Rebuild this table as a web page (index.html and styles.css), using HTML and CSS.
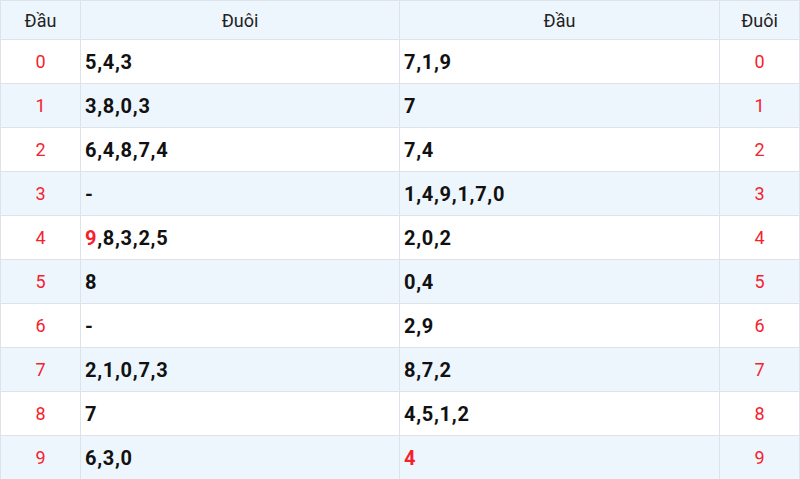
FILE: index.html
```html
<!DOCTYPE html>
<html>
<head>
<meta charset="utf-8">
<link rel="stylesheet" href="styles.css">
</head>
<body>
<table class="loto">
  <colgroup><col class="c-head"><col class="c-tail-a"><col class="c-tail-b"><col class="c-last"></colgroup>
  <thead>
    <tr><th>Đầu</th><th>Đuôi</th><th>Đầu</th><th>Đuôi</th></tr>
  </thead>
  <tbody>
    <tr><td class="num">0</td><td class="val">5,4,3</td><td class="val">7,1,9</td><td class="num">0</td></tr>
    <tr><td class="num">1</td><td class="val">3,8,0,3</td><td class="val">7</td><td class="num">1</td></tr>
    <tr><td class="num">2</td><td class="val">6,4,8,7,4</td><td class="val">7,4</td><td class="num">2</td></tr>
    <tr><td class="num">3</td><td class="val">-</td><td class="val">1,4,9,1,7,0</td><td class="num">3</td></tr>
    <tr><td class="num">4</td><td class="val"><span class="hot">9</span>,8,3,2,5</td><td class="val">2,0,2</td><td class="num">4</td></tr>
    <tr><td class="num">5</td><td class="val">8</td><td class="val">0,4</td><td class="num">5</td></tr>
    <tr><td class="num">6</td><td class="val">-</td><td class="val">2,9</td><td class="num">6</td></tr>
    <tr><td class="num">7</td><td class="val">2,1,0,7,3</td><td class="val">8,7,2</td><td class="num">7</td></tr>
    <tr><td class="num">8</td><td class="val">7</td><td class="val">4,5,1,2</td><td class="num">8</td></tr>
    <tr><td class="num">9</td><td class="val">6,3,0</td><td class="val"><span class="hot">4</span></td><td class="num">9</td></tr>
  </tbody>
</table>
</body>
</html>
```
FILE: styles.css
```css
html, body {
  margin: 0;
  padding: 0;
  background: #ffffff;
}
body {
  font-family: Roboto, "Liberation Sans", sans-serif;
}
.loto {
  width: 800px;
  border-collapse: collapse;
  table-layout: fixed;
}
.c-head { width: 80px; }
.c-tail-a { width: 319px; }
.c-tail-b { width: 320px; }
.loto th, .loto td {
  border: 1px solid #dde3ea;
  padding: 0;
}
.loto th {
  height: 38px;
  background: #eef6fd;
  color: #222222;
  font-size: 18px;
  font-weight: 400;
  text-align: center;
}
.loto td {
  height: 43px;
}
.loto tbody tr:nth-child(even) td {
  background: #eef6fd;
}
.num {
  text-align: center;
  color: #f5222d;
  font-size: 18px;
}
.val {
  text-align: left;
  padding-left: 4px !important;
  color: #111111;
  font-size: 20px;
  font-weight: 700;
  letter-spacing: 0.7px;
}
.hot { color: #f5222d; }
```
